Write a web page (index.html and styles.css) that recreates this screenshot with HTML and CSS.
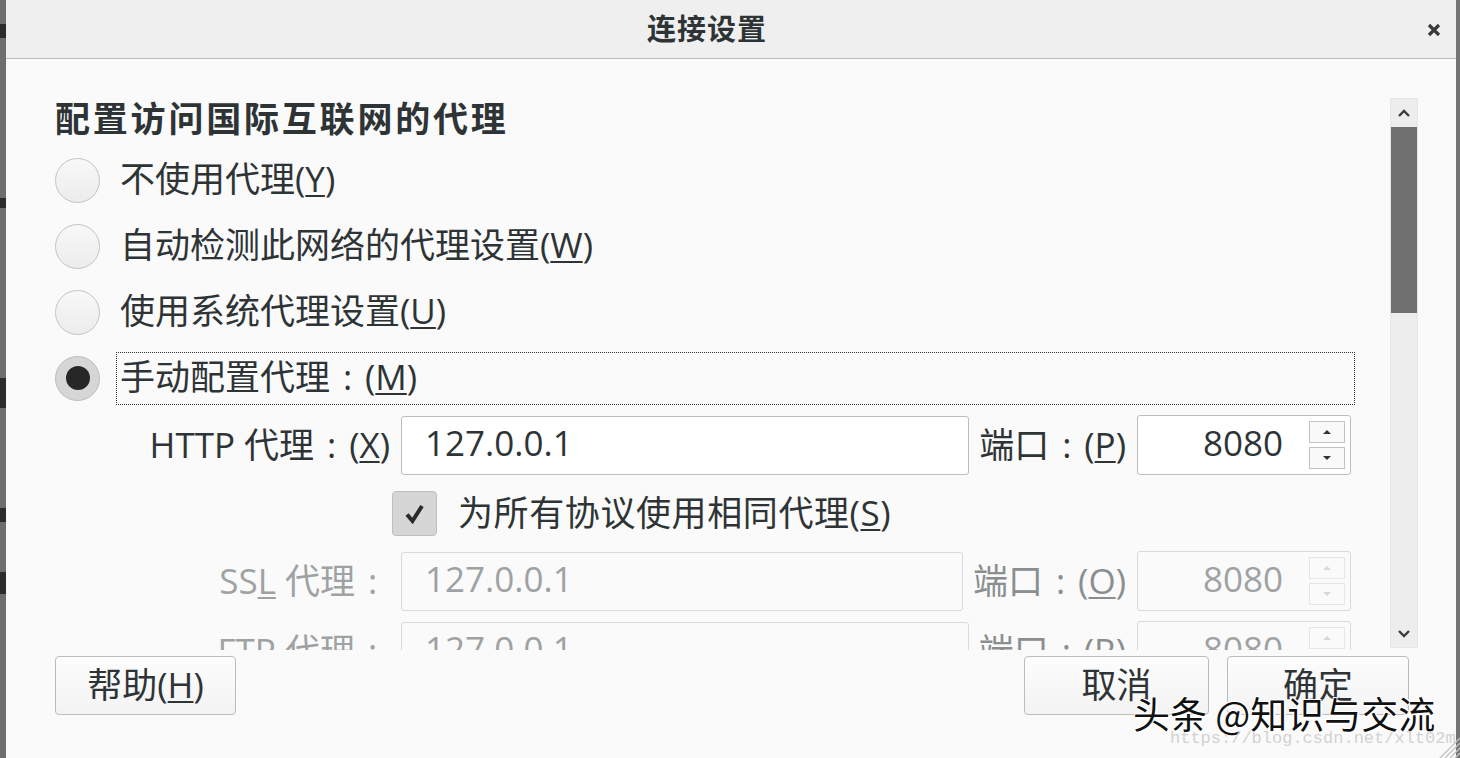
FILE: index.html
```html
<!DOCTYPE html>
<html lang="zh-CN">
<head>
  <meta charset="UTF-8">
  <title>连接设置</title>
  <link rel="stylesheet" href="styles.css">
</head>
<body>
  <div class="screen">
    <div class="backwin">
      <span class="mark m1"></span>
      <span class="mark m2"></span>
      <span class="mark m3"></span>
      <span class="mark m4"></span>
      <span class="mark m5"></span>
    </div>

    <div class="dialog">
      <div class="titlebar">
        <div class="title">连接设置</div>
        <div class="close">
          <svg width="16" height="16" viewBox="0 0 16 16"><path d="M3 3L13 13M13 3L3 13" stroke="#3a3a3a" stroke-width="3.2"/></svg>
        </div>
      </div>

      <div class="main">
        <div class="scroller">
          <div class="pane">
            <h2 class="heading">配置访问国际互联网的代理</h2>

            <div class="option">
              <span class="radio"></span>
              <span class="option-label">不使用代理(<u>Y</u>)</span>
            </div>
            <div class="option">
              <span class="radio"></span>
              <span class="option-label">自动检测此网络的代理设置(<u>W</u>)</span>
            </div>
            <div class="option">
              <span class="radio"></span>
              <span class="option-label">使用系统代理设置(<u>U</u>)</span>
            </div>
            <div class="option">
              <span class="radio checked"></span>
              <span class="option-label focused">手动配置代理<span class="colon">:</span>(<u>M</u>)</span>
            </div>

            <div class="proxy-row first">
              <span class="proxy-label">HTTP 代理<span class="colon">:</span>(<u>X</u>)</span>
              <div class="field">127.0.0.1</div>
              <span class="port-label">端口<span class="colon">:</span>(<u>P</u>)</span>
              <div class="spin">
                <span class="spin-value">8080</span>
                <div class="spin-buttons">
                  <span class="spin-btn"><svg width="10" height="6" viewBox="0 0 10 6"><path d="M1 5L5 1L9 5Z" fill="#333"/></svg></span>
                  <span class="spin-btn"><svg width="10" height="6" viewBox="0 0 10 6"><path d="M1 1L5 5L9 1Z" fill="#333"/></svg></span>
                </div>
              </div>
            </div>

            <div class="check-row">
              <span class="checkbox">
                <svg width="26" height="26" viewBox="0 0 26 26"><path d="M5 13.5L10.5 20L20 5" fill="none" stroke="#2a2a2a" stroke-width="4"/></svg>
              </span>
              <span class="check-label">为所有协议使用相同代理(<u>S</u>)</span>
            </div>

            <div class="proxy-row disabled">
              <span class="proxy-label">SS<u>L</u> 代理<span class="colon">:</span></span>
              <div class="field">127.0.0.1</div>
              <span class="port-label">端口<span class="colon">:</span>(<u>O</u>)</span>
              <div class="spin">
                <span class="spin-value">8080</span>
                <div class="spin-buttons">
                  <span class="spin-btn"><svg width="10" height="6" viewBox="0 0 10 6"><path d="M1 5L5 1L9 5Z" fill="#d8d8d8"/></svg></span>
                  <span class="spin-btn"><svg width="10" height="6" viewBox="0 0 10 6"><path d="M1 1L5 5L9 1Z" fill="#d8d8d8"/></svg></span>
                </div>
              </div>
            </div>

            <div class="proxy-row disabled tight">
              <span class="proxy-label">FTP 代理<span class="colon">:</span></span>
              <div class="field">127.0.0.1</div>
              <span class="port-label">端口<span class="colon">:</span>(<u>R</u>)</span>
              <div class="spin">
                <span class="spin-value">8080</span>
                <div class="spin-buttons">
                  <span class="spin-btn"><svg width="10" height="6" viewBox="0 0 10 6"><path d="M1 5L5 1L9 5Z" fill="#d8d8d8"/></svg></span>
                  <span class="spin-btn"><svg width="10" height="6" viewBox="0 0 10 6"><path d="M1 1L5 5L9 1Z" fill="#d8d8d8"/></svg></span>
                </div>
              </div>
            </div>
          </div>

          <div class="scrollbar">
            <span class="sb-arrow"><svg width="14" height="9" viewBox="0 0 14 9"><path d="M2 7L7 2L12 7" fill="none" stroke="#3c3c3c" stroke-width="2.4"/></svg></span>
            <span class="sb-thumb"></span>
            <span class="sb-rest"></span>
            <span class="sb-arrow"><svg width="14" height="9" viewBox="0 0 14 9"><path d="M2 2L7 7L12 2" fill="none" stroke="#3c3c3c" stroke-width="2.4"/></svg></span>
          </div>
        </div>

        <div class="actions">
          <button class="btn help">帮助(<u>H</u>)</button>
          <span class="spacer"></span>
          <button class="btn cancel">取消</button>
          <button class="btn ok">确定</button>
        </div>
      </div>
    </div>

    <div class="edge"></div>

    <div class="watermark">头条 @知识与交流</div>
    <div class="url">https://blog.csdn.net/xlt02m</div>
    <svg class="grip" width="22" height="24" viewBox="0 0 22 24">
      <path d="M22 4L2 24M22 9L7 24M22 14L12 24M22 19L17 24" stroke="#c4c4c4" stroke-width="1.4"/>
    </svg>
  </div>
</body>
</html>
```

FILE: styles.css
```css
* {
  box-sizing: border-box;
}
html, body {
  margin: 0;
  padding: 0;
}
body {
  font-family: "Open Sans", "Noto Sans CJK SC", sans-serif;
  color: #2e3436;
  background: #fafafa;
  overflow: hidden;
}
u {
  text-decoration-thickness: 2px;
  text-underline-offset: 3px;
}
/* full-width colon drawn centred in its cell */
.colon {
  display: inline-block;
  width: 1em;
  text-align: center;
}

.screen {
  position: relative;
  display: flex;
  width: 1460px;
  height: 758px;
}

/* window behind the dialog */
.backwin {
  width: 6px;
  background: #6e6e6e;
  display: flex;
  flex-direction: column;
}
.mark {
  display: block;
  width: 6px;
  background: #2c2c2c;
}
.m1 { height: 14px; margin-top: 24px; }
.m2 { height: 10px; margin-top: 160px; }
.m3 { height: 30px; margin-top: 170px; }
.m4 { height: 14px; margin-top: 100px; }
.m5 { height: 22px; margin-top: 50px; }

.edge {
  width: 4px;
  background: #747474;
}

.dialog {
  flex: 1;
  display: flex;
  flex-direction: column;
  background: #fafafa;
}

.titlebar {
  height: 59px;
  display: flex;
  align-items: center;
  background: #efefef;
  border-bottom: 1px solid #b9b9b9;
}
.title {
  flex: 1;
  text-align: center;
  font-size: 29px;
  font-weight: bold;
  letter-spacing: 1px;
  padding-bottom: 5px;
  color: #2e3436;
}
.close {
  width: 48px;
  display: flex;
  justify-content: center;
  padding: 2px 0 0 4px;
}

.main {
  flex: 1;
  display: flex;
  flex-direction: column;
}
.scroller {
  height: 591px;
  display: flex;
  overflow: hidden;
}
.pane {
  flex: 1;
  padding: 37px 35px 0 49px;
  font-size: 35px;
}

.heading {
  margin: 0 0 1px;
  font-size: 35px;
  line-height: 46px;
  padding-bottom: 4px;
  font-weight: bold;
  letter-spacing: 2.8px;
}

.option {
  height: 66px;
  display: flex;
  align-items: center;
}
.radio {
  flex: none;
  width: 45px;
  height: 45px;
  border-radius: 50%;
  border: 1px solid #c4c4c4;
  background: linear-gradient(#f8f8f8, #ececec);
  display: flex;
  align-items: center;
  justify-content: center;
}
.radio.checked {
  background: #d6d6d6;
  border-color: #bdbdbd;
}
.radio.checked::after {
  content: "";
  width: 24px;
  height: 24px;
  border-radius: 50%;
  background: #272727;
}
.option-label {
  flex: 1;
  margin-left: 16px;
  padding: 0 3px 4px;
  line-height: 47px;
  border: 1px dotted transparent;
  white-space: nowrap;
}
.option-label.focused {
  border-color: #333;
}

.proxy-row {
  display: flex;
  align-items: center;
  height: 60px;
  margin: 15px 4px 0 0;
}
.proxy-row.first {
  margin-top: 4px;
}
.proxy-row.tight {
  margin-top: 10px;
}
.proxy-label {
  width: 335px;
  margin-right: 11px;
  padding-bottom: 6px;
  text-align: right;
  white-space: nowrap;
}
.field {
  flex: 1;
  height: 59px;
  display: flex;
  align-items: center;
  padding: 0 0 6px 23px;
  background: #fff;
  border: 1px solid #bdbdbd;
  border-radius: 3px;
}
.port-label {
  margin: 0 11px 0 10px;
  padding-bottom: 6px;
  white-space: nowrap;
}
.spin {
  width: 214px;
  height: 60px;
  display: flex;
  align-items: center;
  background: #fff;
  border: 1px solid #bdbdbd;
  border-radius: 3px;
}
.spin-value {
  flex: 1;
  text-align: right;
  padding: 0 26px 6px 0;
}
.spin-buttons {
  display: flex;
  flex-direction: column;
  gap: 4px;
  margin-right: 5px;
}
.spin-btn {
  width: 36px;
  height: 22px;
  display: flex;
  align-items: center;
  justify-content: center;
  border: 1px solid #c3c3c3;
  background: #f9f9f9;
}

.disabled {
  color: #9ea2a3;
}
.disabled .port-label {
  color: #8a8e8f;
}
.disabled .field,
.disabled .spin {
  background: #fafafa;
  border-color: #dadada;
}
.disabled .spin-btn {
  border-color: #e6e6e6;
  background: #fafafa;
}

.check-row {
  display: flex;
  align-items: center;
  height: 45px;
  margin: 16px 0 0 337px;
}
.checkbox {
  flex: none;
  width: 45px;
  height: 45px;
  display: flex;
  align-items: center;
  justify-content: center;
  background: #d6d6d6;
  border: 1px solid #bebebe;
  border-radius: 4px;
}
.check-label {
  margin-left: 21px;
  padding-bottom: 6px;
  letter-spacing: 0.6px;
  white-space: nowrap;
}

.scrollbar {
  width: 28px;
  margin: 39px 38px 2px 0;
  display: flex;
  flex-direction: column;
  background: #ededed;
  border: 1px solid #e6e6e6;
}
.sb-arrow {
  height: 28px;
  display: flex;
  align-items: center;
  justify-content: center;
}
.sb-thumb {
  height: 186px;
  background: #6f6f6f;
}
.sb-rest {
  flex: 1;
}

.actions {
  display: flex;
  padding: 6px 47px 0 49px;
  gap: 18px;
}
.spacer {
  flex: 1;
}
.btn {
  height: 59px;
  font-family: "Open Sans", "Noto Sans CJK SC", sans-serif;
  font-size: 35px;
  color: #2e3436;
  background: linear-gradient(#fdfdfd, #f3f3f3);
  border: 1px solid #bcbcbc;
  border-radius: 4px;
  padding: 0 0 6px;
}
.help { width: 181px; }
.cancel { width: 185px; }
.ok { width: 182px; }

.watermark {
  position: absolute;
  left: 1133px;
  top: 686px;
  font-family: "Noto Sans CJK SC", sans-serif;
  font-size: 37px;
  color: #111;
  white-space: nowrap;
  text-shadow: 2px 2px 0 #fff, -1px -1px 0 #fff, 1px -1px 0 #fff, -1px 1px 0 #fff;
}
.url {
  position: absolute;
  left: 1170px;
  top: 729px;
  font-family: "Liberation Mono", monospace;
  font-size: 17px;
  color: #d2d2d2;
  white-space: nowrap;
}
.grip {
  position: absolute;
  right: 0;
  bottom: 0;
}
```
